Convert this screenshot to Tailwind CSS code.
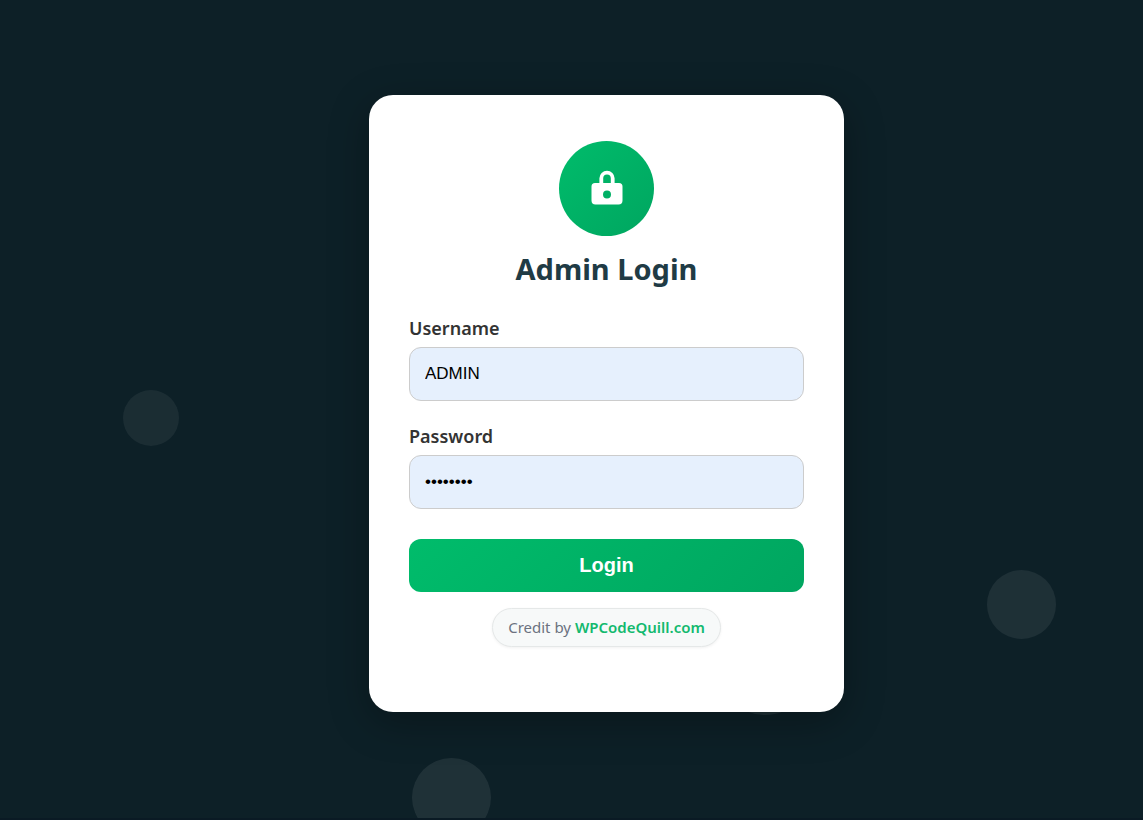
<!DOCTYPE html>
<html lang="en">
<head>
  <meta charset="UTF-8">
  <meta name="viewport" content="width=device-width, initial-scale=1.0">
  <title>Admin Login</title>
  <script src="https://cdn.jsdelivr.net/npm/@tailwindcss/browser@4"></script>
</head>
<body class="relative min-h-screen overflow-hidden bg-[#0d2027] border-b-2 border-[#0a1a24] flex items-start justify-center pt-[95px] pl-[70px] font-['Segoe_UI','Noto_Sans',sans-serif]">

  <!-- Floating bubbles -->
  <div class="absolute left-[123px] top-[390px] size-14 rounded-full bg-white/6"></div>
  <div class="absolute left-[412px] top-[758px] size-[79px] rounded-full bg-white/8"></div>
  <div class="absolute left-[716px] top-[617px] size-[98px] rounded-full bg-white/8"></div>
  <div class="absolute left-[987px] top-[570px] size-[69px] rounded-full bg-white/7"></div>

  <main class="relative w-full max-w-[475px] bg-white rounded-3xl px-10 pt-[46px] pb-[65px] shadow-[0_10px_40px_rgba(0,0,0,0.3)]">
    <div class="mx-auto size-[95px] rounded-full bg-linear-135 from-[#00bc6b] to-[#00a660] flex items-center justify-center">
      <svg class="size-10" viewBox="0 0 40 40" fill="none" aria-hidden="true">
        <path d="M14.300 15V9.300a5.700 5.700 0 0 1 11.400 0V15" stroke="#fff" stroke-width="3.800"/>
        <path fill="#fff" fill-rule="evenodd" d="M8 14h24a3.500 3.500 0 0 1 3.500 3.500v14a4 4 0 0 1-4 4h-23a4 4 0 0 1-4-4v-14A3.500 3.500 0 0 1 8 14Zm12 7.500a4 4 0 1 0 0 8 4 4 0 0 0 0-8Z"/>
      </svg>
    </div>
    <h1 class="mt-[13px] text-[29px] leading-10 font-bold text-center text-[#1f3b45]">Admin Login</h1>

    <form id="loginForm" class="mt-[25px]">
      <label for="username" class="block mb-[5px] text-lg leading-7 font-semibold text-[#333]">Username</label>
      <input type="text" id="username" value="ADMIN" class="block w-full h-[54px] border border-[#ccc] rounded-xl px-[15px] bg-[#e6f0fd] text-[17px] text-black font-['Liberation_Sans',sans-serif]" required>

      <label for="password" class="block mt-[21px] mb-[5px] text-lg leading-7 font-semibold text-[#333]">Password</label>
      <input type="password" id="password" value="password" class="block w-full h-[54px] border border-[#ccc] rounded-xl px-[15px] bg-[#e6f0fd] text-[17px] text-black font-['Liberation_Sans',sans-serif]" required>

      <button type="submit" class="mt-[30px] w-full h-[53px] pb-0.5 rounded-xl bg-linear-135 from-[#00bc6b] to-[#00a660] text-white text-xl font-bold font-['Liberation_Sans',sans-serif]">Login</button>
    </form>

    <div class="mt-4 text-center">
      <p class="inline-block align-top px-[15px] py-[7px] border border-[#e5e8e8] rounded-full bg-[#f7f9f9] shadow-[0_1px_3px_rgba(0,0,0,0.06)] text-[15px] leading-[23px] text-[#6b7280] whitespace-nowrap">Credit by <a href="https://wpcodequill.com" class="font-semibold text-[#13b96f]">WPCodeQuill.com</a></p>
    </div>
  </main>

  <script>
    const form = document.getElementById('loginForm');

    form.addEventListener('submit', (e) => {
      e.preventDefault();
    });
  </script>
</body>
</html>
